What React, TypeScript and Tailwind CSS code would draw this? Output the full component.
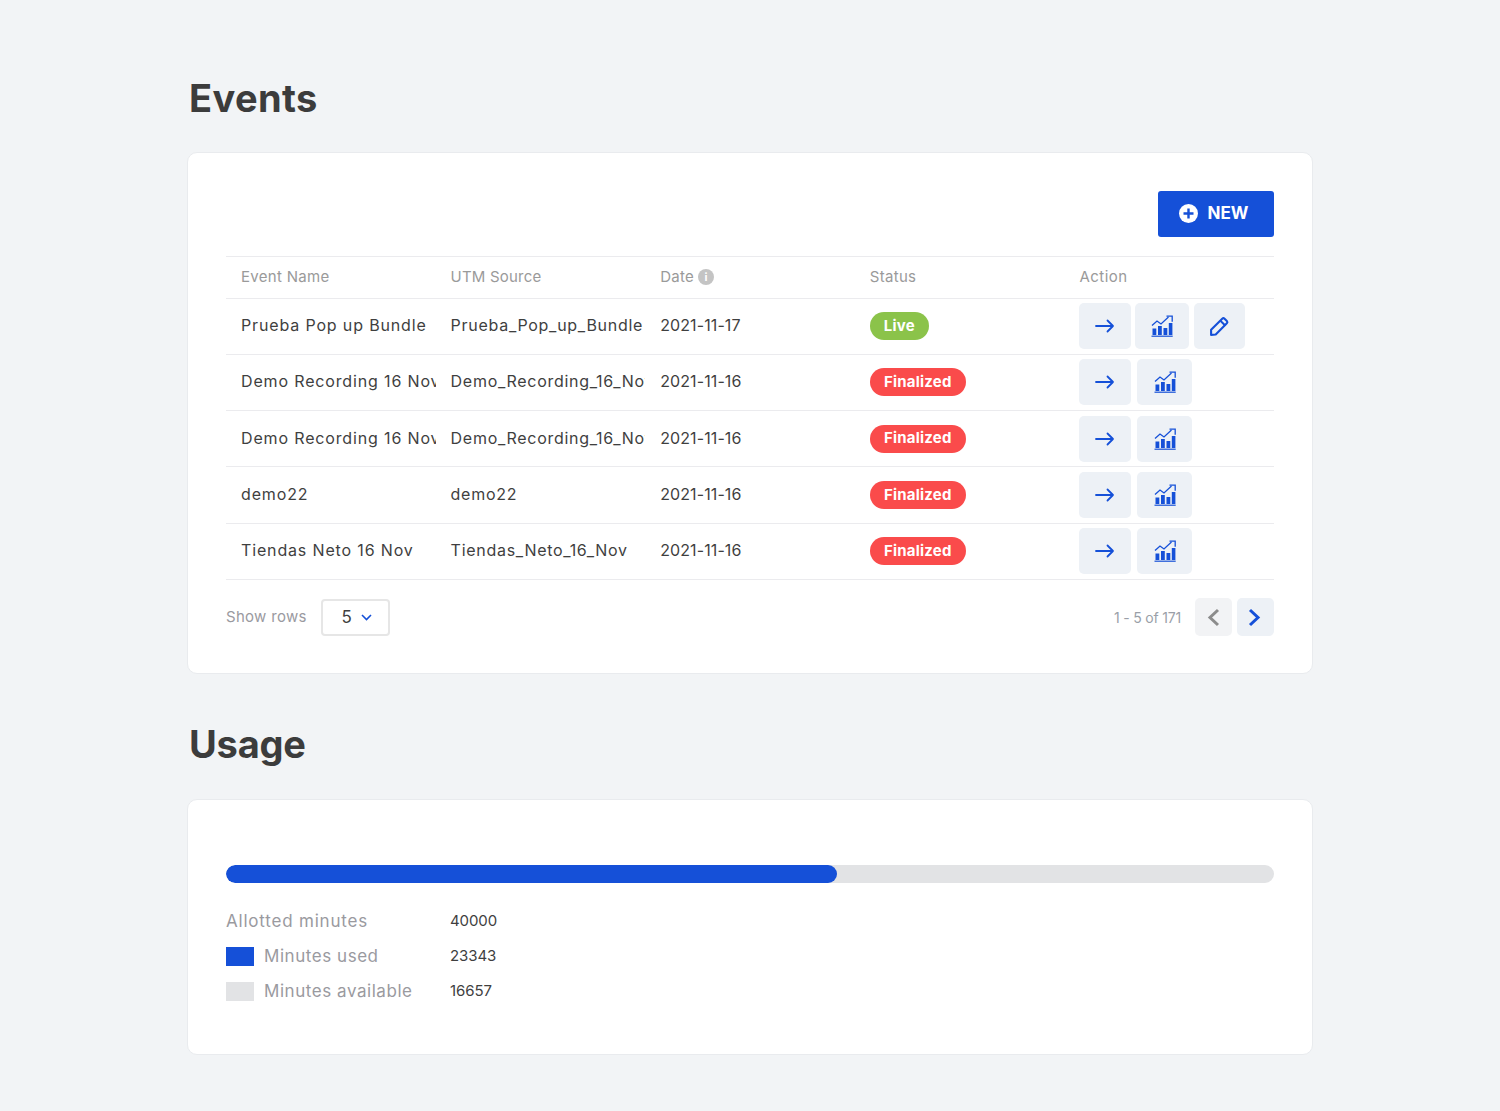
import React from 'react';

const FONT = "font-['Inter',sans-serif]";

const rows = [
  { name: 'Prueba Pop up Bundle', utm: 'Prueba_Pop_up_Bundle', date: '2021-11-17', status: 'Live' },
  { name: 'Demo Recording 16 Nov', utm: 'Demo_Recording_16_Nov', date: '2021-11-16', status: 'Finalized' },
  { name: 'Demo Recording 16 Nov', utm: 'Demo_Recording_16_Nov', date: '2021-11-16', status: 'Finalized' },
  { name: 'demo22', utm: 'demo22', date: '2021-11-16', status: 'Finalized' },
  { name: 'Tiendas Neto 16 Nov', utm: 'Tiendas_Neto_16_Nov', date: '2021-11-16', status: 'Finalized' },
];

const ArrowIcon = () => (
  <svg width="20" height="14" viewBox="0 0 20 14" fill="none" stroke="#1550d8" strokeWidth="1.8" strokeLinecap="round" strokeLinejoin="round">
    <path d="M1 7h17M12.5 1.5 18 7l-5.5 5.5" />
  </svg>
);

const ChartIcon = () => (
  <svg width="22" height="22" viewBox="0 0 22 22" fill="none">
    <path d="M1 10.5 6 6l4 3 7.5-7" stroke="#1550d8" strokeWidth="1.3" />
    <path d="M15.5 1.2h5.7v5.5" stroke="#1550d8" strokeWidth="1.3" />
    <path d="M1.5 13.5h3.8V20H1.5zM7 11h3.8v9H7zM12.5 13h3.8v7h-3.8zM17.8 8h3.6v12h-3.6z" fill="#1550d8" />
    <path d="M0.5 21.2h21.2" stroke="#1550d8" strokeWidth="1.2" />
  </svg>
);

const PencilIcon = () => (
  <svg width="21" height="21" viewBox="0 0 20 20" fill="none" stroke="#1550d8" strokeWidth="2" strokeLinejoin="round">
    <path d="M2 13.2 12.6 2.6a1.6 1.6 0 0 1 2.2 0l2.2 2.2a1.6 1.6 0 0 1 0 2.2L6.4 17.6 2 18z" />
    <path d="M10.8 4.4l4.8 4.8" />
  </svg>
);

const Cell = ({ tracking, children }: { tracking: string; children: React.ReactNode }) => (
  <div className={`overflow-hidden whitespace-nowrap pb-[2px] pl-[15px] text-[16px] text-[#3f3f3f] ${tracking}`}>{children}</div>
);

const Badge = ({ status }: { status: string }) => (
  <span
    className={
      status === 'Live'
        ? 'inline-flex h-[28px] w-[59px] items-center justify-center rounded-full bg-[#8bc34a] text-[15px] font-bold tracking-[0.2px] text-white'
        : 'inline-flex h-[28px] w-[96px] items-center justify-center rounded-full bg-[#fa4b4b] text-[15px] font-bold tracking-[0.2px] text-white'
    }
  >
    {status}
  </span>
);

const ActionButton = ({ width, children }: { width: string; children: React.ReactNode }) => (
  <button className={`flex h-[46px] items-center justify-center rounded-[5px] bg-[#edf1f6] ${width}`}>{children}</button>
);

const Legend = ({ swatch, label, value }: { swatch?: string; label: string; value: string }) => (
  <div className="flex h-[35px] items-center">
    <div className="flex w-[224px] items-center gap-[10px]">
      {swatch && <span className={`h-[19px] w-[28px] ${swatch}`} />}
      <span className={swatch ? 'text-[17px] tracking-[0.55px] text-[#9a9a9f]' : 'text-[17px] tracking-[0.8px] text-[#9a9a9f]'}>{label}</span>
    </div>
    <span className="text-[15px] tracking-[-0.1px] text-[#3f3f3f]">{value}</span>
  </div>
);

export default function App() {
  return (
    <div className={`min-h-[1111px] bg-[#f2f4f6] ${FONT}`}>
      <div className="mx-auto w-[1126px] pt-[71px]">
        <h1 className="h-[81px] pl-[2px] text-[38px] leading-[54px] font-bold tracking-[0.4px] text-[#3c3c3c]">Events</h1>

        <section className="h-[522px] rounded-[10px] border border-[#e9ebee] bg-white px-[38px] pt-[38px]">
          <div className="flex justify-end">
            <button className="flex h-[46px] w-[116px] items-center justify-center gap-[9px] rounded-[3px] bg-[#1550d8] pr-[4px] text-[17px] font-bold tracking-[0.1px] text-white">
              <svg className="mb-px" width="19" height="19" viewBox="0 0 19 19">
                <circle cx="9.5" cy="9.5" r="9.5" fill="#fff" />
                <path d="M9.5 4.5v10M4.5 9.5h10" stroke="#1550d8" strokeWidth="2.4" />
              </svg>
              NEW
            </button>
          </div>

          <div className="mt-[19px] grid h-[42.5px] grid-cols-5 items-center border-y border-[#ebebee] text-[15px] tracking-[0.3px] text-[#9a9a9a]">
            <div className="pl-[15px]">Event Name</div>
            <div className="pl-[15px] tracking-[0.2px]">UTM Source</div>
            <div className="flex items-center gap-[4px] pl-[15px]">
              Date
              <span className="flex h-[16px] w-[16px] items-center justify-center rounded-full bg-[#c4c4c4] text-[11px] leading-none font-bold text-white">i</span>
            </div>
            <div className="pl-[15px]">Status</div>
            <div className="pl-[15px] tracking-[0.5px]">Action</div>
          </div>

          {rows.map((row, i) => (
            <div key={i} className="grid h-[56.25px] grid-cols-5 items-center border-b border-[#ebebee]">
              <Cell tracking="tracking-[0.85px]">{row.name}</Cell>
              <Cell tracking="tracking-[0.72px]">{row.utm}</Cell>
              <Cell tracking="tracking-[0.1px]">{row.date}</Cell>
              <div className="pl-[15px]">
                <Badge status={row.status} />
              </div>
              <div className={i === 0 ? 'flex gap-[4px] pl-[15px]' : 'flex gap-[6px] pl-[15px]'}>
                <ActionButton width="w-[52px]">
                  <ArrowIcon />
                </ActionButton>
                <ActionButton width={i === 0 ? 'w-[54px]' : 'w-[55px]'}>
                  <ChartIcon />
                </ActionButton>
                {row.status === 'Live' && (
                  <ActionButton width="w-[51px] ml-px">
                    <PencilIcon />
                  </ActionButton>
                )}
              </div>
            </div>
          ))}

          <div className="mt-[18.5px] flex items-center justify-between">
            <div className="flex items-center gap-[14px]">
              <span className="text-[15px] tracking-[0.3px] text-[#9a9a9f]">Show rows</span>
              <div className="flex h-[37px] w-[69px] items-center justify-center gap-[9px] rounded-[4px] border-2 border-[#e6e6e6] pl-[3px] text-[17px] text-[#3f3f3f]">
                5
                <svg width="11" height="7" viewBox="0 0 11 7" fill="none" stroke="#1550d8" strokeWidth="1.6">
                  <path d="M1 1l4.5 4.5L10 1" />
                </svg>
              </div>
            </div>
            <div className="flex items-center">
              <span className="mr-[14px] text-[14px] tracking-[-0.2px] text-[#9a9fa8]">1 - 5 of 171</span>
              <button className="flex h-[38px] w-[37px] items-center justify-center rounded-[5px] bg-[#f2f3f5]">
                <svg width="13" height="19" viewBox="0 0 13 19" fill="none" stroke="#8c8c8c" strokeWidth="3">
                  <path d="M11 2 3 9.5l8 7.5" />
                </svg>
              </button>
              <button className="ml-[5px] flex h-[38px] w-[37px] items-center justify-center rounded-[5px] bg-[#edf1f6]">
                <svg className="mr-[2px]" width="13" height="19" viewBox="0 0 13 19" fill="none" stroke="#1550d8" strokeWidth="3">
                  <path d="M2 2l8 7.5L2 17" />
                </svg>
              </button>
            </div>
          </div>
        </section>

        <h2 className="mt-[43px] h-[82px] pl-[2px] text-[38px] leading-[54px] font-bold tracking-[-0.2px] text-[#3c3c3c]">Usage</h2>

        <section className="h-[256px] rounded-[10px] border border-[#e9ebee] bg-white px-[38px] pt-[65px]">
          <div className="h-[18px] overflow-hidden rounded-full bg-[#e2e3e5]">
            <div className="h-full w-[58.3%] rounded-full bg-[#1550d8]" />
          </div>
          <div className="mt-[21px]">
            <Legend label="Allotted minutes" value="40000" />
            <Legend swatch="bg-[#1550d8]" label="Minutes used" value="23343" />
            <Legend swatch="bg-[#e2e3e5]" label="Minutes available" value="16657" />
          </div>
        </section>
      </div>
    </div>
  );
}
